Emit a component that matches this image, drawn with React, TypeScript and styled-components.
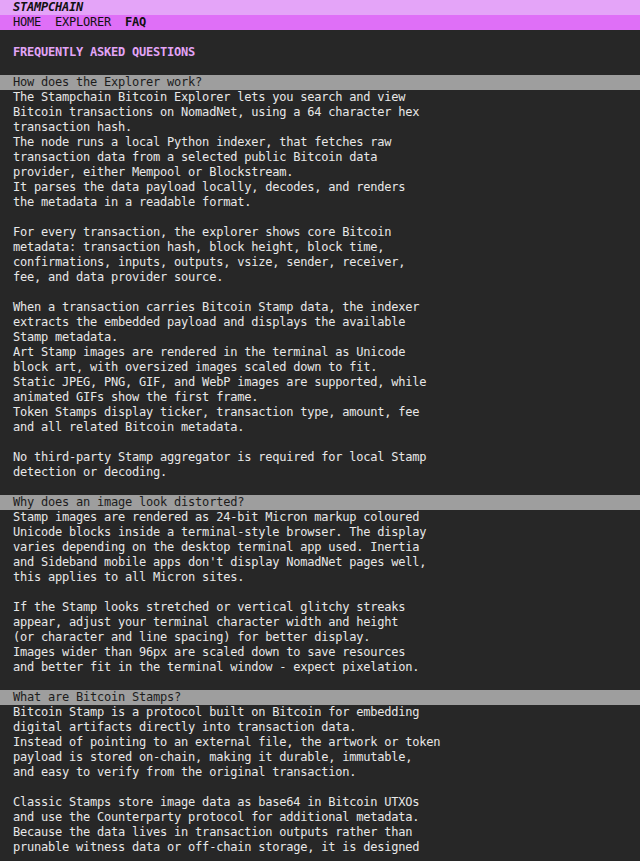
import React from "react";
import styled, { createGlobalStyle } from "styled-components";

const GlobalStyle = createGlobalStyle`
  html, body {
    margin: 0;
    padding: 0;
    background: #272727;
  }
  #root {
    min-height: 100vh;
    background: #272727;
  }
`;

const Page = styled.div`
  font-family: "DejaVu Sans Mono", "Liberation Mono", monospace;
  font-size: 12px;
  letter-spacing: -0.22px;
  line-height: 15px;
  color: #e8e8e8;
  background: #272727;
  min-height: 100vh;
`;

const Bar = styled.div<{ $bg: string; $fg?: string }>`
  height: 15px;
  padding-left: 13px;
  background: ${(p) => p.$bg};
  color: ${(p) => p.$fg ?? "#111"};
  white-space: pre;
  overflow: hidden;
`;

const Brand = styled.span`
  font-weight: bold;
  font-style: italic;
`;

const NavItem = styled.span<{ $active?: boolean }>`
  font-weight: ${(p) => (p.$active ? "bold" : "normal")};
`;

const Line = styled.div`
  height: 15px;
  padding-left: 13px;
  white-space: pre;
`;

const Heading = styled(Line)`
  color: #e2a4f6;
  font-weight: bold;
`;

const Question = styled(Bar)`
  color: #1c1c1c;
`;

const Spacer = styled.div`
  height: 15px;
`;

type Faq = { q: string; a: string[] };

const faqs: Faq[] = [
  {
    q: "How does the Explorer work?",
    a: [
      "The Stampchain Bitcoin Explorer lets you search and view",
      "Bitcoin transactions on NomadNet, using a 64 character hex",
      "transaction hash.",
      "The node runs a local Python indexer, that fetches raw",
      "transaction data from a selected public Bitcoin data",
      "provider, either Mempool or Blockstream.",
      "It parses the data payload locally, decodes, and renders",
      "the metadata in a readable format.",
      "",
      "For every transaction, the explorer shows core Bitcoin",
      "metadata: transaction hash, block height, block time,",
      "confirmations, inputs, outputs, vsize, sender, receiver,",
      "fee, and data provider source.",
      "",
      "When a transaction carries Bitcoin Stamp data, the indexer",
      "extracts the embedded payload and displays the available",
      "Stamp metadata.",
      "Art Stamp images are rendered in the terminal as Unicode",
      "block art, with oversized images scaled down to fit.",
      "Static JPEG, PNG, GIF, and WebP images are supported, while",
      "animated GIFs show the first frame.",
      "Token Stamps display ticker, transaction type, amount, fee",
      "and all related Bitcoin metadata.",
      "",
      "No third-party Stamp aggregator is required for local Stamp",
      "detection or decoding.",
      "",
    ],
  },
  {
    q: "Why does an image look distorted?",
    a: [
      "Stamp images are rendered as 24-bit Micron markup coloured",
      "Unicode blocks inside a terminal-style browser. The display",
      "varies depending on the desktop terminal app used. Inertia",
      "and Sideband mobile apps don't display NomadNet pages well,",
      "this applies to all Micron sites.",
      "",
      "If the Stamp looks stretched or vertical glitchy streaks",
      "appear, adjust your terminal character width and height",
      "(or character and line spacing) for better display.",
      "Images wider than 96px are scaled down to save resources",
      "and better fit in the terminal window - expect pixelation.",
      "",
    ],
  },
  {
    q: "What are Bitcoin Stamps?",
    a: [
      "Bitcoin Stamp is a protocol built on Bitcoin for embedding",
      "digital artifacts directly into transaction data.",
      "Instead of pointing to an external file, the artwork or token",
      "payload is stored on-chain, making it durable, immutable,",
      "and easy to verify from the original transaction.",
      "",
      "Classic Stamps store image data as base64 in Bitcoin UTXOs",
      "and use the Counterparty protocol for additional metadata.",
      "Because the data lives in transaction outputs rather than",
      "prunable witness data or off-chain storage, it is designed",
    ],
  },
];

export default function App() {
  return (
    <>
      <GlobalStyle />
      <Page>
        <Bar $bg="#e4a4f8">
          <Brand>STAMPCHAIN</Brand>
        </Bar>
        <Bar $bg="#df6ff7">
          <NavItem>HOME</NavItem>
          {"  "}
          <NavItem>EXPLORER</NavItem>
          {"  "}
          <NavItem $active>FAQ</NavItem>
        </Bar>
        <Spacer />
        <Heading>FREQUENTLY ASKED QUESTIONS</Heading>
        <Spacer />
        {faqs.map((f) => (
          <section key={f.q}>
            <Question $bg="#9e9e9e">{f.q}</Question>
            {f.a.map((l, i) =>
              l === "" ? <Spacer key={i} /> : <Line key={i}>{l}</Line>
            )}
          </section>
        ))}
      </Page>
    </>
  );
}
